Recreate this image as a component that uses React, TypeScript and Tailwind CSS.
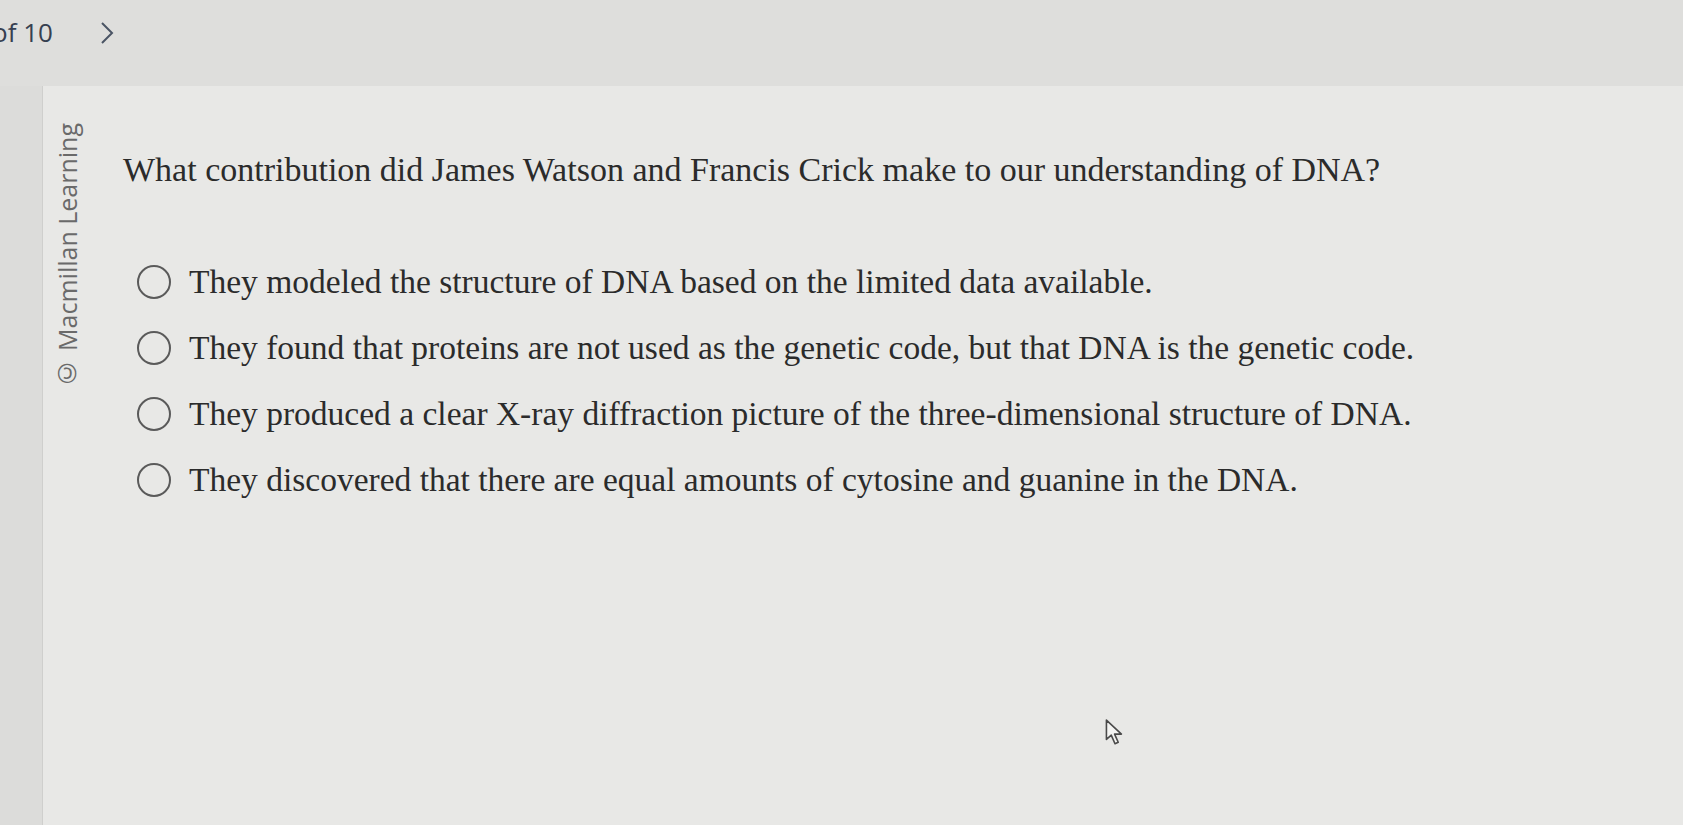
import React from "react"

const options = [
  "They modeled the structure of DNA based on the limited data available.",
  "They found that proteins are not used as the genetic code, but that DNA is the genetic code.",
  "They produced a clear X-ray diffraction picture of the three-dimensional structure of DNA.",
  "They discovered that there are equal amounts of cytosine and guanine in the DNA.",
]

function Cursor() {
  return (
    <svg width="22" height="30" viewBox="0 0 20 28" className="absolute left-[1104px] top-[718px]">
      <path d="M2 2 L2 20 L6.5 16 L10 24 L13 22.6 L9.6 15 L16 15 Z" fill="#f4f4f2" stroke="#4a4a4a" strokeWidth="1.5" strokeLinejoin="round" />
    </svg>
  )
}

export default function App() {
  return (
    <div className="relative w-[1683px] h-[825px] overflow-hidden bg-[#dededc]">
      <div className="h-[86px] flex items-start pt-[15px] text-[#364050] [font-family:'Open_Sans',sans-serif]">
        <span className="text-[26px] ml-[-8px] leading-[34px]">of 10</span>
        <svg width="16" height="24" viewBox="0 0 16 24" className="ml-[46px] mt-[6px]">
          <path d="M3 2 L13 12 L3 22" fill="none" stroke="#4a5464" strokeWidth="2" />
        </svg>
      </div>

      <div className="flex h-[739px]">
        <div className="w-[43px] bg-[#dcdcda] border-r border-[#cfcfcd]" />
        <div className="flex-1 flex bg-[#e8e8e6]">
          <div className="w-[80px] pt-[37px] pl-[10px]">
            <div className="[writing-mode:vertical-rl] rotate-180 text-[25px] text-[#6a6a6a] [font-family:'Open_Sans',sans-serif] leading-[28px]">
              © Macmillan Learning
            </div>
          </div>
          <div className="pt-[64px] [font-family:'Liberation_Serif',serif] text-[#2b2b2b]">
            <p className="text-[34px] leading-[40px]">
              What contribution did James Watson and Francis Crick make to our understanding of DNA?
            </p>
            <div className="mt-[72px] flex flex-col gap-[26px] pl-[14px]">
              {options.map((opt) => (
                <label key={opt} className="flex items-center gap-[18px]">
                  <span className="w-[34px] h-[34px] rounded-full border-2 border-[#5a5a5a] shrink-0" />
                  <span className="text-[33.5px] leading-[40px]">{opt}</span>
                </label>
              ))}
            </div>
          </div>
        </div>
      </div>
      <Cursor />
    </div>
  )
}
